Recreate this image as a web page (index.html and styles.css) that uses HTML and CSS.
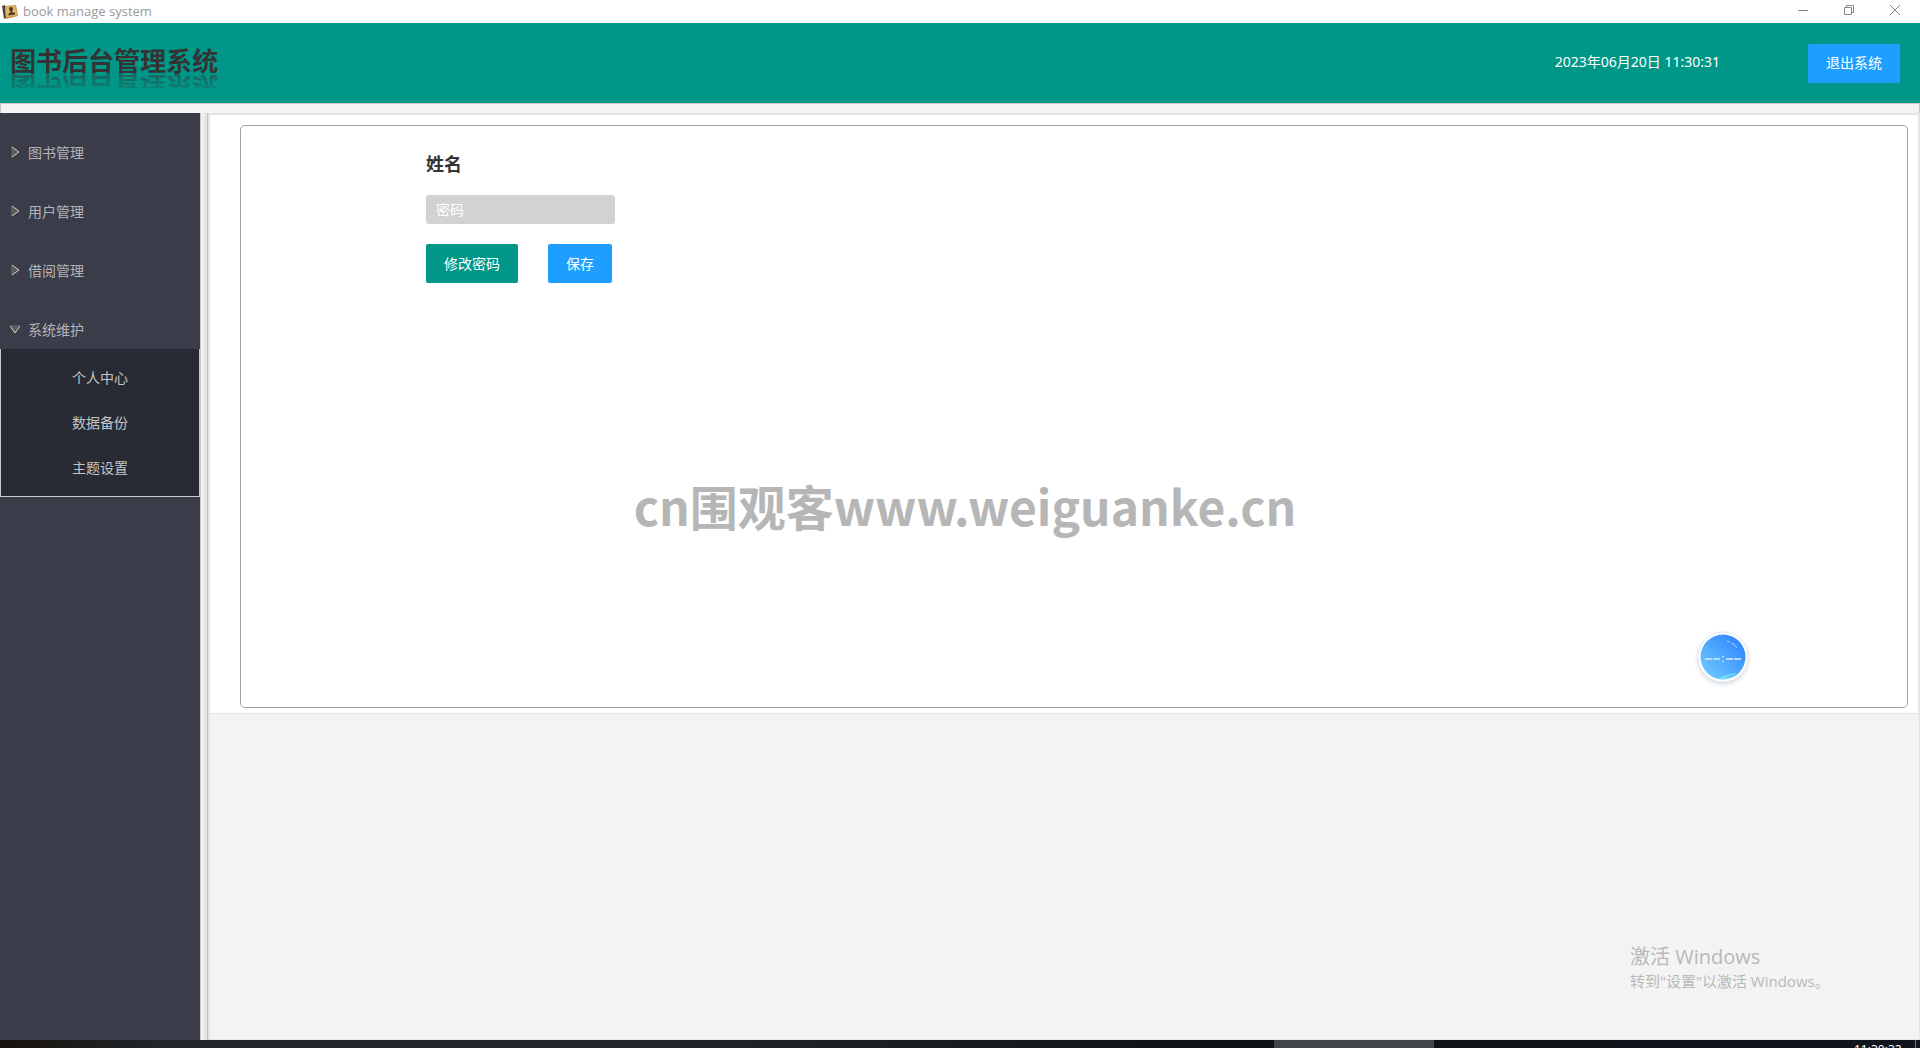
FILE: index.html
```html
<!DOCTYPE html>
<html lang="zh-CN">
<head>
<meta charset="utf-8">
<title>book manage system</title>
<link rel="stylesheet" href="styles.css">
</head>
<body>
<div class="titlebar">
  <svg class="app-icon" width="16" height="16" viewBox="0 0 16 16">
    <path d="M0 2 L3 1 L4 14 L2 15 Z" fill="#4d4234"/>
    <path d="M3 2 L14 1 L16 12 L4 15 Z" fill="#c9964a"/>
    <path d="M4 3 L13 2 L15 11 L5 13 Z" fill="#e3b96c"/>
    <circle cx="9" cy="5" r="2" fill="#4b3a22"/>
    <path d="M8.500 6h1.500l.5 2.500 2.500 0v2l-6.500 1v-2l2-1z" fill="#4b3a22"/>
  </svg>
  <span class="app-name">book manage system</span>
  <div class="window-controls">
    <button class="window-button" aria-label="Minimize"><svg width="10" height="10" viewBox="0 0 10 10"><path d="M0 5.500h10"/></svg></button>
    <button class="window-button" aria-label="Restore"><svg width="10" height="10" viewBox="0 0 10 10"><path d="M.5 2.500h7v7h-7zM2.500 2.500v-2h7v7h-2"/></svg></button>
    <button class="window-button" aria-label="Close"><svg width="10" height="10" viewBox="0 0 10 10"><path d="M0 0l10 10M10 0L0 10"/></svg></button>
  </div>
</div>
<header class="header">
  <h1 class="brand">图书后台管理系统</h1>
  <time class="clock">2023年06月20日 11:30:31</time>
  <button class="button button-blue">退出系统</button>
</header>
<div class="workspace">
  <nav class="sidebar">
    <details class="menu"><summary class="menu-title"><svg class="arrow" width="10" height="12" viewBox="0 0 10 12"><path d="M2 1v10" stroke="#77776f" fill="none"/><path d="M2 1l7 5-7 5" fill="#5b5b58" stroke="#d0d0c8"/></svg>图书管理</summary></details>
    <details class="menu"><summary class="menu-title"><svg class="arrow" width="10" height="12" viewBox="0 0 10 12"><path d="M2 1v10" stroke="#77776f" fill="none"/><path d="M2 1l7 5-7 5" fill="#5b5b58" stroke="#d0d0c8"/></svg>用户管理</summary></details>
    <details class="menu"><summary class="menu-title"><svg class="arrow" width="10" height="12" viewBox="0 0 10 12"><path d="M2 1v10" stroke="#77776f" fill="none"/><path d="M2 1l7 5-7 5" fill="#5b5b58" stroke="#d0d0c8"/></svg>借阅管理</summary></details>
    <details class="menu" open><summary class="menu-title"><svg class="arrow" width="10" height="12" viewBox="0 0 10 12"><path d="M0 3h10" stroke="#77776f" fill="none"/><path d="M0 3l5 7 5-7" fill="#5b5b58" stroke="#d0d0c8"/></svg>系统维护</summary>
      <div class="submenu">
        <a class="submenu-link" href="#profile">个人中心</a>
        <a class="submenu-link" href="#backup">数据备份</a>
        <a class="submenu-link" href="#theme">主题设置</a>
      </div>
    </details>
  </nav>
  <div class="splitter"></div>
  <main class="content">
    <section class="page">
      <form class="panel">
        <h2 class="user-name">姓名</h2>
        <input class="password" type="password" placeholder="密码" aria-label="密码">
        <div class="actions">
          <button class="button button-green" type="button">修改密码</button>
          <button class="button button-blue" type="button">保存</button>
        </div>
      </form>
    </section>
  </main>
</div>
<footer class="taskbar">
  <span class="task-active"></span>
  <span class="task-clock">11:30:32</span>
  <span class="show-desktop"></span>
</footer>
<div class="watermark">cn围观客www.weiguanke.cn</div>
<svg class="float-ball" width="60" height="60" viewBox="0 0 60 60">
  <defs>
    <linearGradient id="ball" x1="0" y1="1" x2="1" y2="0"><stop offset="0.1" stop-color="#6cc7ff"/><stop offset="0.9" stop-color="#2f86ff"/></linearGradient>
    <clipPath id="disc"><circle cx="30" cy="30" r="22"/></clipPath>
  </defs>
  <circle class="ball-rim" cx="30" cy="30" r="25" fill="#fff" stroke="#e0edf8"/>
  <circle cx="30" cy="30" r="22.500" fill="url(#ball)"/>
  <path d="M20 54Q34 46 46 46v8z" fill="#7fe0fa" clip-path="url(#disc)"/>
  <path d="M34 50l10-3" stroke="#38a5e8" stroke-dasharray="2 1"/>
  <path d="M12 32h7m1 0h7m6 0h7m1 0h7" stroke="#b5dcff" stroke-width="2"/>
  <path d="M29 29.500h2m-2 5h2" stroke="#b5dcff" stroke-width="1.500"/>
  <path d="M34 14l3 1m1 1q4 1 6 5" stroke="#a5d0ff" fill="none"/>
</svg>
<div class="activation">
  <div class="activation-title">激活 Windows</div>
  <div class="activation-text">转到"设置"以激活 Windows。</div>
</div>
</body>
</html>
```
FILE: styles.css
```css
* { box-sizing: border-box; }

body {
  margin: 0;
  height: 100vh;
  display: flex;
  flex-direction: column;
  position: relative;
  overflow: hidden;
  background: #f3f3f3;
  color: #333;
  font: 14px/20px "Noto Sans CJK SC", sans-serif;
}

button, input { font: inherit; }

/* Window title bar */
.titlebar {
  flex: none;
  height: 23px;
  display: flex;
  align-items: center;
  padding: 0 2px;
  background: #fff;
}
.app-icon { margin-right: 5px; }
.app-name { padding-bottom: 2px; color: #999; font: 13px/20px "Open Sans", sans-serif; }
.window-controls { display: flex; align-self: flex-start; margin-left: auto; }
.window-button {
  width: 46px;
  height: 20px;
  padding: 0;
  border: 0;
  background: none;
  display: grid;
  place-items: center;
}
.window-button svg { fill: none; stroke: #888; }

/* Header */
.header {
  flex: none;
  height: 80px;
  display: flex;
  align-items: center;
  padding: 0 20px 0 10px;
  background: #009688;
}
.brand {
  margin: 0 0 6px;
  color: #333;
  font-size: 26px;
  line-height: 28px;
  -webkit-box-reflect: below 0 linear-gradient(transparent 50%, rgba(0, 0, 0, 0.2) 50%, rgba(0, 0, 0, 0.5));
}
.clock { margin: 0 88px 2px auto; color: #fff; font-family: "Noto Sans", "Noto Sans CJK SC", sans-serif; }

.button {
  height: 39px;
  padding: 0 18px 2px;
  border: 0;
  border-radius: 2px;
  color: #fff;
}
.button-blue { background: #1e9fff; }
.button-green { background: #009688; }

/* Workspace */
.workspace {
  flex: 1;
  min-height: 0;
  display: flex;
  padding-top: 10px;
  box-shadow: inset 1px 1px #c8c8c8, inset -1px 0 #c8c8c8;
}
.sidebar { flex: none; width: 200px; background: #3b3c49; }
.menu { padding-top: 20px; }
.menu-title {
  height: 39px;
  display: flex;
  align-items: center;
  padding: 0 10px 2px;
  color: #b4b4b8;
  list-style: none;
}
.arrow { margin-right: 8px; }
.submenu {
  padding: 6px 0;
  border: solid #c8c8c8;
  border-width: 0 1px 1px;
  background: #282b33;
}
.submenu-link {
  display: block;
  color: #c3c5c8;
  line-height: 45px;
  text-align: center;
  text-decoration: none;
}
.splitter {
  flex: none;
  width: 8px;
  border: solid #c4c4c4;
  border-width: 0 1px;
  background: linear-gradient(90deg, #f6f6f6, #dedede);
}
.content { flex: 1; border: 2px solid #e4e4e4; border-width: 2px 1px 1px 2px; }
.page { padding: 10px 10px 5px 30px; border-right: 1px solid #e4e4e4; border-bottom: 1px solid #e4e4e4; background: #fff; }
.panel {
  min-height: 583px;
  padding: 27px 185px;
  border: 1px solid #a0a0a0;
  border-radius: 5px;
}
.user-name { margin: 0 0 22px; font-size: 18px; line-height: 20px; }
.password {
  display: block;
  width: 189px;
  height: 29px;
  margin-bottom: 20px;
  padding: 0 10px 2px;
  border: 0;
  border-radius: 3px;
  background: #d2d2d2;
  color: #fff;
}
.password::placeholder { color: #fff; opacity: 1; }
.actions { display: flex; gap: 30px; }

/* Desktop taskbar */
.taskbar {
  flex: none;
  height: 8px;
  display: flex;
  justify-content: flex-end;
  overflow: hidden;
  background: linear-gradient(90deg, #17110b, #20262a 8%, #20262a 35%, #0c1214 65%, #10151d);
}
.task-active { width: 160px; margin-right: 420px; background: #424547; }
.task-clock { width: 49px; padding-top: 3px; color: #fff; font: 12px/14px "Noto Sans", sans-serif; }
.show-desktop { width: 5px; margin-left: 12px; border-left: 1px solid #777; }

/* Overlays */
.watermark {
  position: absolute;
  top: 469px;
  left: 0;
  right: 0;
  padding-left: 10px;
  color: #b6b6b6;
  font-size: 48px;
  font-weight: 700;
  line-height: 72px;
  text-align: center;
  pointer-events: none;
}
.float-ball { position: absolute; right: 167px; top: 627px; }
.ball-rim { filter: drop-shadow(0 2px 2px #d5dae0); }
.activation {
  position: absolute;
  right: 88px;
  bottom: 57px;
  width: 202px;
  color: #b8b8b8;
  font-family: "Open Sans", "Noto Sans CJK SC", sans-serif;
  pointer-events: none;
  white-space: nowrap;
}
.activation-title { font-size: 20px; line-height: 28px; }
.activation-text { font-size: 15px; line-height: 20px; }
```
